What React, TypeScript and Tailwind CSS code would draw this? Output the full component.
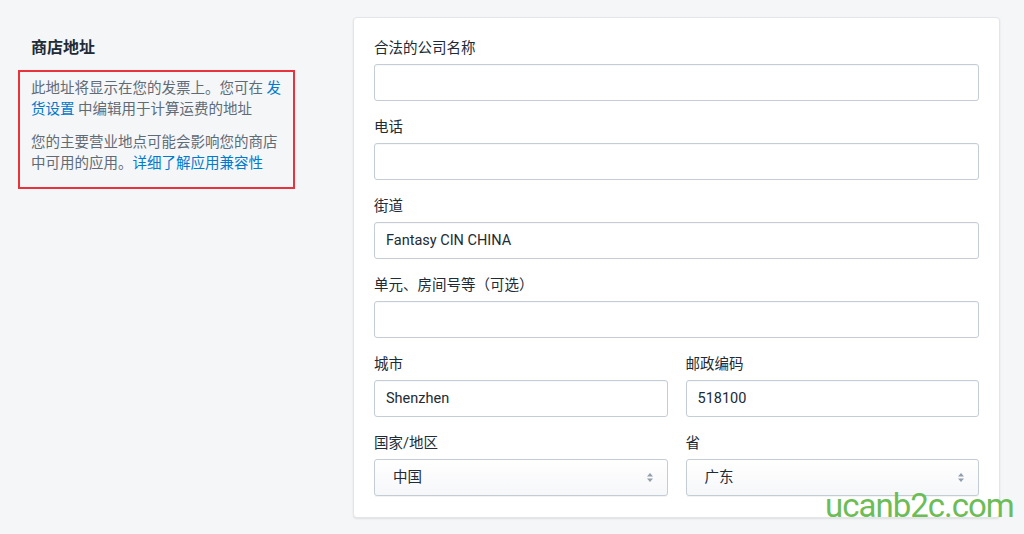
import React from 'react'

const font = { fontFamily: 'Roboto, "Noto Sans CJK SC", sans-serif' }

const Field = (props: { label: string; value?: string; className?: string }) => {
  return (
    <div className={props.className}>
      <div className="text-[14.5px] leading-[20px] text-[#212b36] mb-[5px]">{props.label}</div>
      <div className="h-[37px] border border-[#c4cdd5] rounded-[3px] bg-white flex items-center px-[11px] text-[14.5px] text-[#212b36] shadow-[inset_0_1px_0_0_rgba(99,115,129,0.05)]">
        {props.value}
      </div>
    </div>
  )
}

const SelectField = (props: { label: string; value: string; className?: string }) => {
  return (
    <div className={props.className}>
      <div className="text-[14.5px] leading-[20px] text-[#212b36] mb-[5px]">{props.label}</div>
      <div className="h-[37px] border border-[#c4cdd5] rounded-[3px] bg-gradient-to-b from-white to-[#f6f7f9] flex items-center justify-between pl-[18px] pr-[13px] text-[14.5px] text-[#212b36] shadow-[0_1px_0_0_rgba(22,29,37,0.05)]">
        <span>{props.value}</span>
        <svg width="8" height="11" viewBox="0 0 8 11">
          <path d="M4 1 L7 4.5 H1 Z" fill="#919eab" />
          <path d="M4 10 L7 6.5 H1 Z" fill="#919eab" />
        </svg>
      </div>
    </div>
  )
}

export default function App() {
  return (
    <div className="relative w-[1024px] h-[534px] bg-[#f4f6f8] overflow-hidden" style={font}>
      <div className="flex pl-[18px] pt-[17px]">
        <div className="w-[277px] shrink-0">
          <h2 className="text-[16px] leading-[20px] font-bold text-[#212b36] ml-[13px] mt-[21px]">商店地址</h2>
          <div className="mt-[12px] border-2 border-[#e8333c] px-[11px] pt-[6px] pb-[13px] text-[14.5px] leading-[21px] text-[#5f6b77]">
            <p>
              此地址将显示在您的发票上。您可在 <span className="text-[#007ace]">发货设置</span> 中编辑用于计算运费的地址
            </p>
            <p className="mt-[12px]">
              您的主要营业地点可能会影响您的商店中可用的应用。<span className="text-[#007ace]">详细了解应用兼容性</span>
            </p>
          </div>
        </div>
        <div className="ml-[58px] w-[647px] h-[501px] bg-white rounded-[4px] border border-[#e3e6e9] shadow-[0_1px_2px_0_rgba(63,63,68,0.12)] px-[20px] pt-[21px]">
          <div className="flex flex-col gap-[17px]">
            <Field label="合法的公司名称" />
            <Field label="电话" />
            <Field label="街道" value="Fantasy CIN CHINA" />
            <Field label="单元、房间号等（可选）" />
            <div className="flex gap-[18px]">
              <Field label="城市" value="Shenzhen" className="flex-1" />
              <Field label="邮政编码" value="518100" className="flex-1" />
            </div>
            <div className="flex gap-[18px]">
              <SelectField label="国家/地区" value="中国" className="flex-1" />
              <SelectField label="省" value="广东" className="flex-1" />
            </div>
          </div>
        </div>
      </div>
      <div className="absolute left-[825px] top-[486px] text-[33px] leading-[40px] tracking-[-1px] text-[#6dbd57] whitespace-nowrap" style={{ fontFamily: 'Roboto, sans-serif' }}>
        ucanb2c.com
      </div>
    </div>
  )
}
